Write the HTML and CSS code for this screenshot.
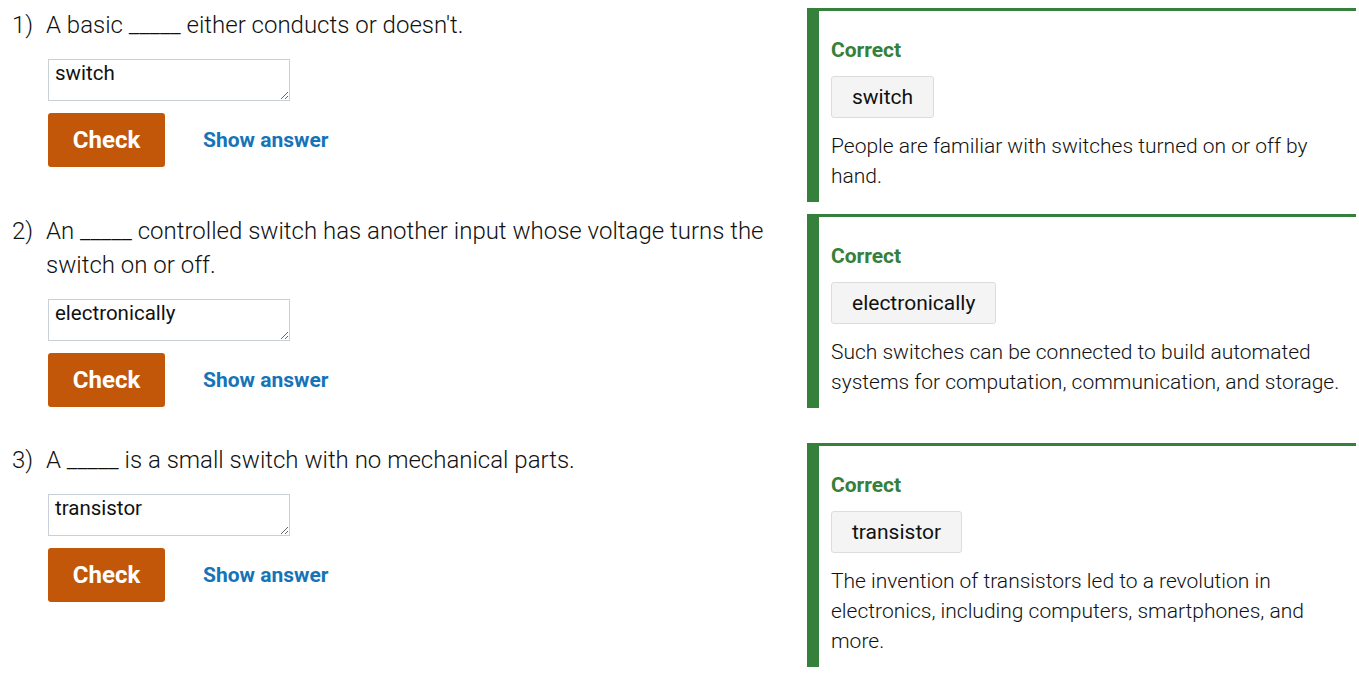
FILE: index.html
```html
<!DOCTYPE html>
<html>
<head>
<meta charset="utf-8">
<link rel="stylesheet" href="styles.css">
</head>
<body>
<div class="list">
  <div class="row">
    <div class="question">
      <div class="prompt"><span class="num">1)</span><span class="qtext">A basic _____ either conducts or doesn't.</span></div>
      <textarea class="answer">switch</textarea>
      <div class="actions"><button class="check">Check</button><span class="show">Show answer</span></div>
    </div>
    <div class="panel">
      <div class="status">Correct</div>
      <div class="chip">switch</div>
      <div class="explain">People are familiar with switches turned on or off by hand.</div>
    </div>
  </div>
  <div class="row">
    <div class="question">
      <div class="prompt"><span class="num">2)</span><span class="qtext">An _____ controlled switch has another input whose voltage turns the switch on or off.</span></div>
      <textarea class="answer">electronically</textarea>
      <div class="actions"><button class="check">Check</button><span class="show">Show answer</span></div>
    </div>
    <div class="panel">
      <div class="status">Correct</div>
      <div class="chip">electronically</div>
      <div class="explain">Such switches can be connected to build automated systems for computation, communication, and storage.</div>
    </div>
  </div>
  <div class="row">
    <div class="question">
      <div class="prompt"><span class="num">3)</span><span class="qtext">A _____ is a small switch with no mechanical parts.</span></div>
      <textarea class="answer">transistor</textarea>
      <div class="actions"><button class="check">Check</button><span class="show">Show answer</span></div>
    </div>
    <div class="panel">
      <div class="status">Correct</div>
      <div class="chip">transistor</div>
      <div class="explain">The invention of transistors led to a revolution in electronics, including computers, smartphones, and more.</div>
    </div>
  </div>
</div>
</body>
</html>
```
FILE: styles.css
```css
html, body {
  margin: 0;
  padding: 0;
  background: #ffffff;
}
body {
  font-family: Roboto, "Liberation Sans", sans-serif;
  color: #111111;
}
.list {
  padding: 8px 3px 0 12px;
  display: flex;
  flex-direction: column;
  gap: 12px;
}
.row {
  display: flex;
  align-items: flex-start;
}
.question {
  flex: 1;
  padding-bottom: 24px;
}
.prompt {
  display: flex;
  font-size: 24px;
  font-weight: 300;
  line-height: 34px;
  padding-right: 20px;
}
.num {
  width: 34px;
  flex: none;
}
.answer {
  display: block;
  margin: 17px 0 0 36px;
  width: 242px;
  height: 42px;
  box-sizing: border-box;
  border: 1px solid #c9d1d8;
  border-radius: 0;
  padding: 1px 6px;
  font-family: Roboto, "Liberation Sans", sans-serif;
  font-size: 20.5px;
  color: #111111;
}
.actions {
  display: flex;
  align-items: center;
  margin: 12px 0 0 36px;
  gap: 38px;
}
.check {
  width: 117px;
  height: 54px;
  border: none;
  border-radius: 3px;
  background: #c2570a;
  color: #ffffff;
  font-family: Roboto, "Liberation Sans", sans-serif;
  font-weight: 700;
  font-size: 24px;
  padding: 0;
}
.show {
  color: #1574b8;
  font-weight: 700;
  font-size: 21px;
}
.panel {
  width: 549px;
  flex: none;
  box-sizing: border-box;
  border-top: 3px solid #35803a;
  border-left: 12px solid #35803a;
  padding: 24px 12px 11px 12px;
}
.status {
  color: #35803a;
  font-weight: 700;
  font-size: 21px;
  line-height: 30px;
}
.chip {
  display: inline-block;
  margin-top: 11px;
  height: 42px;
  box-sizing: border-box;
  padding: 0 20px;
  line-height: 40px;
  background: #f4f4f4;
  border: 1px solid #dcdcdc;
  border-radius: 3px;
  font-size: 21px;
  color: #111111;
}
.explain {
  margin-top: 13px;
  font-size: 21px;
  font-weight: 300;
  line-height: 30px;
}
```
